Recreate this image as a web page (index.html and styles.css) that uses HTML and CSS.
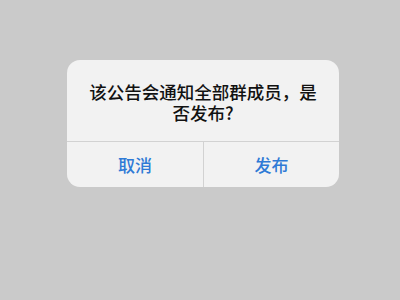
FILE: index.html
```html
<!DOCTYPE html>
<html lang="zh-CN">
<head>
<meta charset="utf-8">
<link rel="stylesheet" href="styles.css">
</head>
<body>
<div class="dialog">
  <div class="message">该公告会通知全部群成员，是否发布?</div>
  <div class="actions">
    <div class="btn">取消</div>
    <div class="btn">发布</div>
  </div>
</div>
</body>
</html>
```
FILE: styles.css
```css
html, body {
  margin: 0;
  height: 100%;
}
body {
  background: #cacaca;
  padding: 60px 0 0 67px;
  box-sizing: border-box;
  font-family: "Noto Sans CJK SC", "Noto Sans", sans-serif;
}
.dialog {
  width: 272px;
  height: 127px;
  background: #f2f2f2;
  border-radius: 13px;
  display: flex;
  flex-direction: column;
  overflow: hidden;
}
.message {
  flex: 1;
  box-sizing: border-box;
  padding: 21px 18px 0;
  font-size: 17.5px;
  line-height: 21px;
  font-weight: 500;
  color: #111;
  text-align: center;
}
.actions {
  height: 45px;
  display: grid;
  grid-template-columns: 1fr 1fr;
  border-top: 1px solid #d2d2d2;
}
.btn {
  display: flex;
  align-items: center;
  justify-content: center;
  font-size: 17px;
  font-weight: 500;
  color: #2f7ad6;
}
.btn + .btn {
  border-left: 1px solid #d2d2d2;
}
```
